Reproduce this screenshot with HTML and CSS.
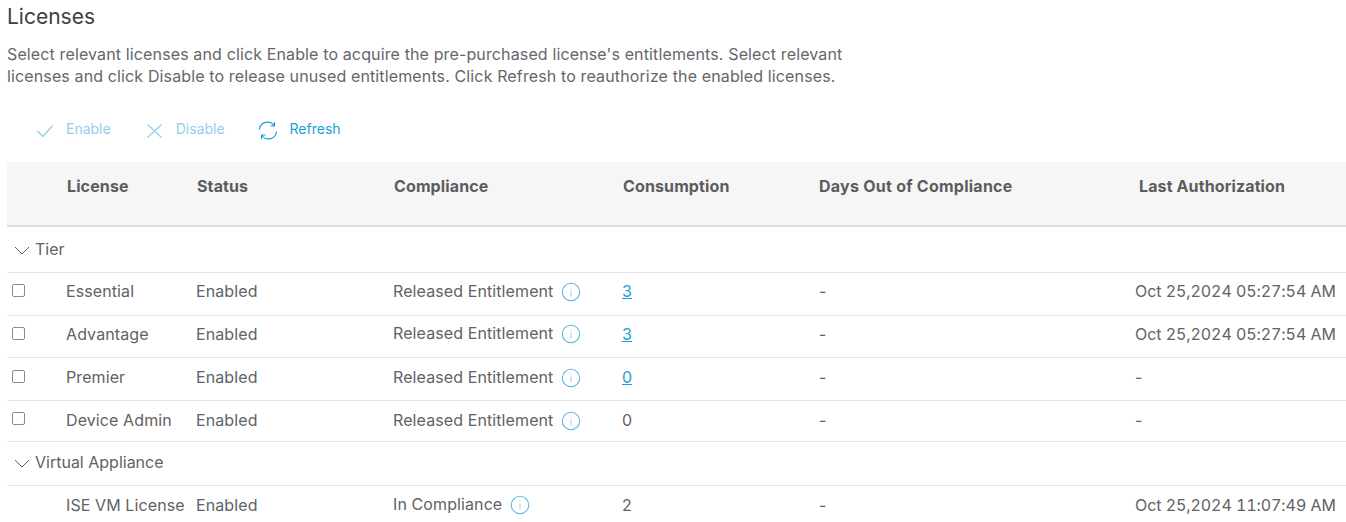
FILE: index.html
```html
<!DOCTYPE html>
<html lang="en">
<head>
  <meta charset="UTF-8" />
  <title>Licenses</title>
  <link rel="stylesheet" href="styles.css">
</head>
<body>
  <h1 class="title">Licenses</h1>
  <p class="intro">Select relevant licenses and click Enable to acquire the pre-purchased license's entitlements. Select relevant licenses and click Disable to release unused entitlements. Click Refresh to reauthorize the enabled licenses.</p>

  <div class="toolbar">
    <div class="tool disabled">
      <svg class="ico-check" width="16" height="12" viewBox="0 0 16 12"><path d="M.5 6l5.5 5.5L15.5.5"/></svg>
      <span>Enable</span>
    </div>
    <div class="tool disabled">
      <svg class="ico-x" width="15" height="14" viewBox="0 0 15 14"><path d="M.5.5l14 13M14.5.5l-14 13"/></svg>
      <span>Disable</span>
    </div>
    <div class="tool">
      <svg class="ico-refresh" width="20" height="19" viewBox="0 0 20 19"><path d="M1.5 8.5A8 8 0 0 1 16 4.5M18.5 10.5A8 8 0 0 1 4 14.5M16.5 1v4h-4M3.5 18v-4h4"/></svg>
      <span>Refresh</span>
    </div>
  </div>

  <table class="grid">
    <colgroup>
      <col class="c-check"><col class="c-license"><col class="c-status"><col class="c-compliance"><col class="c-consumption"><col class="c-days"><col>
    </colgroup>
    <thead>
      <tr>
        <th></th>
        <th>License</th>
        <th>Status</th>
        <th>Compliance</th>
        <th>Consumption</th>
        <th class="days-head">Days Out of Compliance</th>
        <th class="last-head">Last Authorization</th>
      </tr>
    </thead>
    <tbody>
      <tr class="group first"><td colspan="7"><svg class="chev" width="16" height="9" viewBox="0 0 16 9"><path d="M1 1l7 7 7-7"/></svg>Tier</td></tr>
      <tr class="row-a">
        <td><span class="box"></span></td>
        <td>Essential</td>
        <td>Enabled</td>
        <td>Released Entitlement<svg class="info" width="20" height="20" viewBox="0 0 20 20"><circle cx="10" cy="10" r="8.7"/><path d="M10 8.5v6M10 5.5v1"/></svg></td>
        <td><a href="#">3</a></td>
        <td>-</td>
        <td class="date">Oct 25,2024 05:27:54 AM</td>
      </tr>
      <tr class="row-b">
        <td><span class="box"></span></td>
        <td>Advantage</td>
        <td>Enabled</td>
        <td>Released Entitlement<svg class="info" width="20" height="20" viewBox="0 0 20 20"><circle cx="10" cy="10" r="8.7"/><path d="M10 8.5v6M10 5.5v1"/></svg></td>
        <td><a href="#">3</a></td>
        <td>-</td>
        <td class="date">Oct 25,2024 05:27:54 AM</td>
      </tr>
      <tr class="row-c">
        <td><span class="box"></span></td>
        <td>Premier</td>
        <td>Enabled</td>
        <td>Released Entitlement<svg class="info" width="20" height="20" viewBox="0 0 20 20"><circle cx="10" cy="10" r="8.7"/><path d="M10 8.5v6M10 5.5v1"/></svg></td>
        <td><a href="#">0</a></td>
        <td>-</td>
        <td>-</td>
      </tr>
      <tr class="row-d">
        <td><span class="box"></span></td>
        <td>Device Admin</td>
        <td>Enabled</td>
        <td>Released Entitlement<svg class="info" width="20" height="20" viewBox="0 0 20 20"><circle cx="10" cy="10" r="8.7"/><path d="M10 8.5v6M10 5.5v1"/></svg></td>
        <td>0</td>
        <td>-</td>
        <td>-</td>
      </tr>
      <tr class="group second"><td colspan="7"><svg class="chev" width="16" height="9" viewBox="0 0 16 9"><path d="M1 1l7 7 7-7"/></svg>Virtual Appliance</td></tr>
      <tr class="row-e">
        <td></td>
        <td>ISE VM License</td>
        <td>Enabled</td>
        <td>In Compliance<svg class="info" width="20" height="20" viewBox="0 0 20 20"><circle cx="10" cy="10" r="8.7"/><path d="M10 8.5v6M10 5.5v1"/></svg></td>
        <td>2</td>
        <td>-</td>
        <td class="date">Oct 25,2024 11:07:49 AM</td>
      </tr>
    </tbody>
  </table>
</body>
</html>
```

FILE: styles.css
```css
html, body {
  height: 522px;
  overflow: hidden;
}

body {
  margin: 0;
  padding: 6px 0 0 7px;
  box-sizing: border-box;
  background: #fff;
  color: #626265;
  font-family: Inter, "Noto Sans", sans-serif;
  font-size: 16px;
}

.title {
  margin: 0;
  font-size: 21px;
  line-height: 22px;
  font-weight: 400;
  color: #3f3f42;
}

.intro {
  margin: 15px 0 0;
  width: 860px;
  font-size: 16px;
  line-height: 22px;
  letter-spacing: 0.13px;
  color: #66666a;
}

.toolbar {
  display: flex;
  height: 66px;
  align-items: center;
  padding-left: 30px;
  margin-top: 9px;
}

.tool {
  display: flex;
  align-items: center;
  color: #1ba0d7;
  font-size: 14px;
}

.tool svg {
  fill: none;
  stroke: #1ba0d7;
  stroke-width: 1.2;
}

.tool span {
  margin-bottom: 1px;
}

.tool.disabled {
  opacity: 0.5;
}

.ico-check { margin: 4px 13px 0 0; }
.ico-x { margin: 4px 14px 0 36px; }
.ico-refresh { margin: 3px 12px 0 33px; }

.grid {
  width: 1339px;
  border-collapse: collapse;
  table-layout: fixed;
}

.c-check { width: 59px; }
.c-license { width: 130px; }
.c-status { width: 197px; }
.c-compliance { width: 229px; }
.c-consumption { width: 197px; }
.c-days { width: 316px; }

th {
  height: 64px;
  padding: 0 0 15px 1px;
  background: #f6f6f6;
  border-bottom: 2px solid #dfdfdf;
  text-align: left;
  font-size: 16px;
  font-weight: 700;
  letter-spacing: 0.12px;
  color: #5c5c5f;
  box-sizing: border-box;
}

th.days-head {
  padding-left: 0;
  letter-spacing: 0.25px;
}

th.last-head {
  padding-left: 4px;
}

td {
  padding: 0 0 3px;
  border-bottom: 1px solid #e3e3e3;
  white-space: nowrap;
  letter-spacing: 0.1px;
}

td.date {
  font-variant-numeric: tabular-nums;
  letter-spacing: -0.07px;
}

.group td {
  padding: 0 0 0 7px;
  letter-spacing: 0;
}

.group.second td {
  padding-bottom: 2px;
}

.group.first { height: 46px; }
.group.second { height: 44px; }
.row-a { height: 43px; }
.row-b { height: 42px; }
.row-c { height: 43px; }
.row-d { height: 41px; }
.row-e { height: 42px; }

.row-a td, .row-b td {
  padding-bottom: 5px;
}

.row-a .box, .row-b .box {
  margin-top: -1px;
}

.row-d td {
  padding-bottom: 1px;
}

.row-d .box {
  margin-top: -3px;
}

.chev {
  fill: none;
  stroke: #626265;
  stroke-width: 1;
  margin-right: 5px;
}

.box {
  display: block;
  width: 11px;
  height: 11px;
  margin: -2px 0 0 5px;
  border: 1px solid #8a8a8d;
  border-radius: 2px;
}

.info {
  fill: none;
  stroke: #5fb6df;
  stroke-width: 1.1;
  margin-left: 8px;
  vertical-align: -5px;
}

.info path {
  stroke: #a5d6ec;
}

a {
  color: #1ba0d7;
}
```
